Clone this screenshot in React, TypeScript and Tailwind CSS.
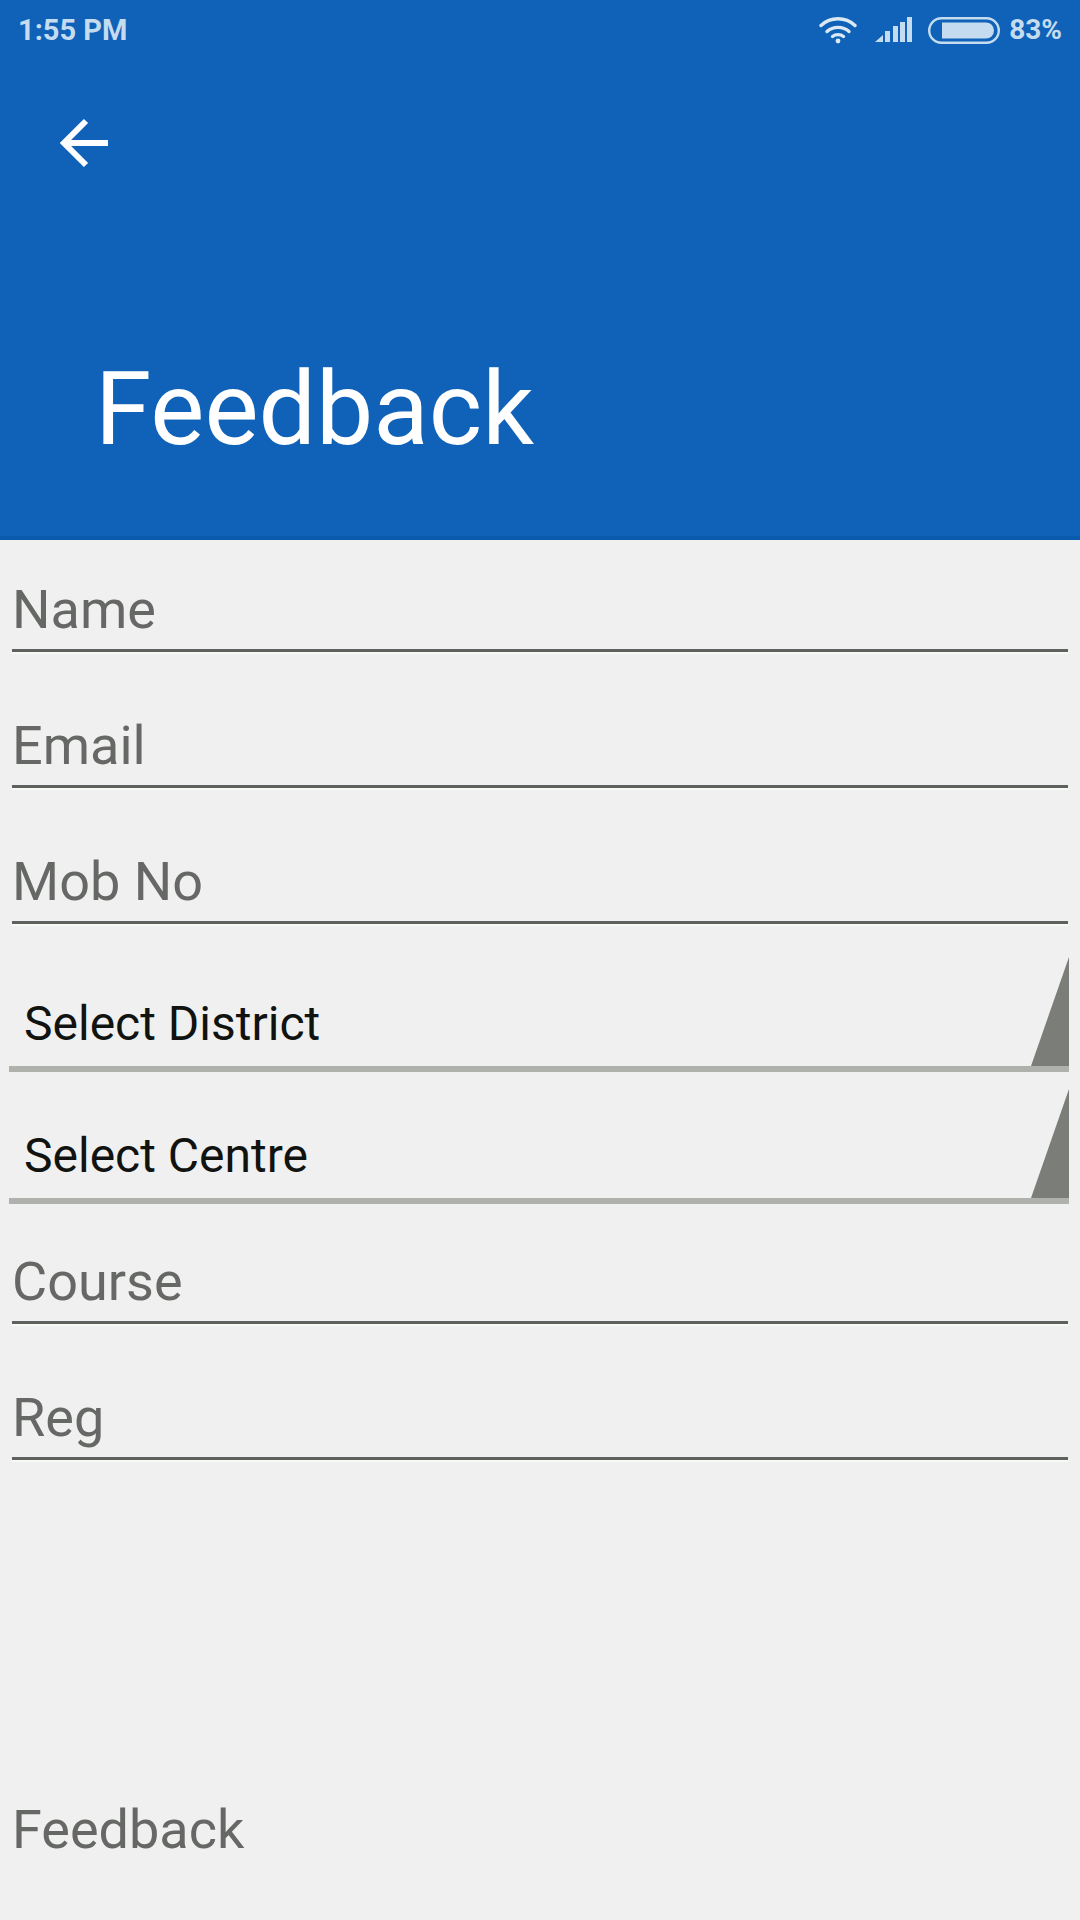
const roboto = "font-['Roboto',sans-serif]";

function InputField({ label, height }: { label: string; height: string }) {
  return (
    <div className={`ml-3 mr-3 flex flex-col justify-end ${height}`}>
      <div className="pb-[8px] text-[54px] leading-[63px] text-[#666865]">{label}</div>
      <div className="h-[3px] bg-[#5f615f]" />
      <div className="h-[2px] bg-[#f7f9f5]" />
    </div>
  );
}

function SelectField({ label, height }: { label: string; height: string }) {
  return (
    <div className={`relative ml-[9px] mr-[11px] flex flex-col justify-end ${height}`}>
      <div className="pl-[15px] pb-[14px] text-[48px] leading-[56px] text-[#111311]">{label}</div>
      <div className="h-[6px] bg-[#afb1ad]" />
      <svg className="absolute bottom-[6px] right-0 h-[109px] w-[38px]" viewBox="0 0 38 109">
        <polygon points="38,0 38,109 0,109" fill="#7a7d78" />
      </svg>
    </div>
  );
}

function StatusBar() {
  return (
    <div className="flex h-[60px] items-center justify-between pl-[18px] pr-[18px] text-[#c5dcf0]">
      <span className="text-[29px] font-bold leading-none">1:55 PM</span>
      <div className="flex items-center">
        <svg width="38" height="28" viewBox="0 0 38 28" fill="none" stroke="#dbe9f5" strokeWidth="3.4" strokeLinecap="round">
          <path d="M2 9.5C11.5 0.5 26.5 0.5 36 9.5" />
          <path d="M8 15.5C14 10 24 10 30 15.5" />
          <path d="M13.5 20.5C16.5 18 21.5 18 24.5 20.5" />
          <circle cx="19" cy="25" r="2.4" fill="#dbe9f5" stroke="none" />
        </svg>
        <svg className="ml-[18px]" width="38" height="26" viewBox="0 0 38 26" fill="#c5dcf0">
          <polygon points="0,25 8,25 8,18" />
          <rect x="10" y="14" width="5" height="11" />
          <rect x="18" y="9" width="5" height="16" />
          <rect x="25" y="5" width="5" height="20" />
          <rect x="32" y="0" width="5" height="25" />
        </svg>
        <svg className="ml-[15px]" width="72" height="27" viewBox="0 0 72 27" fill="none">
          <rect x="1.2" y="1.2" width="69.6" height="24.6" rx="12.3" stroke="#c5dcf0" strokeWidth="2.4" />
          <path d="M14 5.5H58A8 8 0 0 1 66 13.5A8 8 0 0 1 58 21.5H14Z" fill="#c5dcf0" />
        </svg>
        <span className="ml-[9px] text-[28px] font-bold leading-none">83%</span>
      </div>
    </div>
  );
}

export default function App() {
  return (
    <div className={`h-[1920px] w-[1080px] overflow-hidden bg-[#f0f0f0] ${roboto}`}>
      <header className="h-[540px] border-b-[4px] border-[#0a5aad] bg-[#0f62b7]">
        <StatusBar />
        <div className="pl-[60px] pt-[57px]">
          <svg width="50" height="52" viewBox="0 0 50 52" fill="none" stroke="#ffffff" strokeWidth="6">
            <path d="M48 26H6" />
            <path d="M26 4L4 26L26 48" />
          </svg>
        </div>
        <h1 className="pl-[95px] pt-[180px] text-[102px] font-normal leading-[120px] text-white">Feedback</h1>
      </header>

      <InputField label="Name" height="h-[114px]" />
      <InputField label="Email" height="h-[136px]" />
      <InputField label="Mob No" height="h-[136px]" />
      <SelectField label="Select District" height="h-[146px]" />
      <SelectField label="Select Centre" height="h-[132px]" />
      <InputField label="Course" height="h-[122px]" />
      <InputField label="Reg" height="h-[136px]" />

      <div className="pl-[12px] pt-[336px] text-[54px] leading-[63px] text-[#666865]">Feedback</div>
    </div>
  );
}
